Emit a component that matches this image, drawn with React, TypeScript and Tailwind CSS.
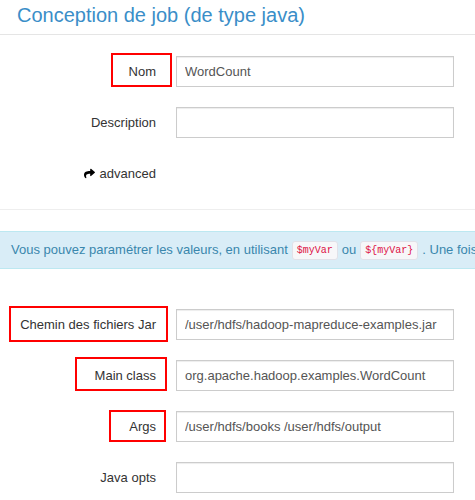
import React from 'react';
import { FaShare } from 'react-icons/fa';

type Mark = { left: number; top: number; width: number; height: number };

const Field = ({ label, value, mark }: { label: string; value?: string; mark?: Mark }) => (
    <div className="flex items-center h-[31px]">
        <div className="relative w-[156px] h-full flex items-center justify-end text-[13px] text-[#333333]">
            {label}
            {mark && (
                <div
                    className="absolute border-2 border-[#ff0000]"
                    style={{ left: mark.left, top: mark.top, width: mark.width, height: mark.height }}
                />
            )}
        </div>
        <input
            readOnly
            value={value ?? ''}
            className="ml-[20px] w-[278px] h-[31px] border border-[#cccccc] bg-white pl-[8px] text-[13px] text-[#555555] outline-none shadow-[inset_0_1px_1px_rgba(0,0,0,0.075)] font-['Liberation_Sans',Arial,sans-serif]"
        />
    </div>
);

const Code = ({ children }: { children: React.ReactNode }) => (
    <code className="inline-block mx-[4px] px-[4px] py-[1px] leading-[15px] rounded-[3px] border border-[#e1e1e8] bg-[#f7f7f9] text-[#dd1144] text-[10px] font-['Liberation_Mono',monospace]">
        {children}
    </code>
);

export default function App() {
    return (
        <div className="w-[475px] h-[500px] overflow-hidden bg-white font-['Liberation_Sans',Arial,sans-serif]">
            <h1 className="pl-[17px] pb-[4px] text-[20px] leading-[30px] font-normal text-[#3a8ec8] border-b border-[#e5e5e5] whitespace-nowrap">
                Conception de job (de type java)
            </h1>

            {/* general */}
            <div className="mt-[21px] flex flex-col gap-[20px]">
                <Field label="Nom" value="WordCount" mark={{ left: 111, top: -3, width: 61, height: 34 }} />
                <Field label="Description" />
                <div className="flex items-center justify-end w-[156px] h-[31px] gap-[4px] text-[13px] text-[#333333]">
                    <FaShare className="w-[13px] h-[11px] text-black" />
                    <span>advanced</span>
                </div>
            </div>

            <div className="mt-[20px] border-t border-[#eeeeee]" />

            {/* info */}
            <div className="mt-[21px] h-[38px] flex items-center pl-[11px] border-y border-[#bce8f1] bg-[#d9edf7] text-[13px] text-[#3a87ad] whitespace-nowrap overflow-hidden">
                Vous pouvez paramétrer les valeurs, en utilisant <Code>$myVar</Code> ou <Code>{'${myVar}'}</Code>. Une fois
            </div>

            {/* java */}
            <div className="mt-[40px] flex flex-col gap-[20px]">
                <Field
                    label="Chemin des fichiers Jar"
                    value="/user/hdfs/hadoop-mapreduce-examples.jar"
                    mark={{ left: 9, top: -3, width: 159, height: 36 }}
                />
                <Field
                    label="Main class"
                    value="org.apache.hadoop.examples.WordCount"
                    mark={{ left: 75, top: -3, width: 92, height: 34 }}
                />
                <Field
                    label="Args"
                    value="/user/hdfs/books /user/hdfs/output"
                    mark={{ left: 109, top: -1, width: 57, height: 32 }}
                />
                <Field label="Java opts" />
            </div>
        </div>
    );
}
